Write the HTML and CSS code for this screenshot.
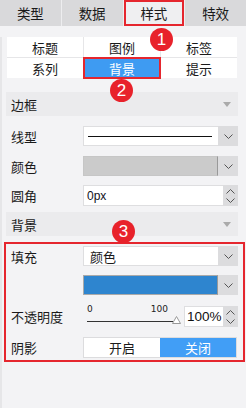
FILE: index.html
```html
<!DOCTYPE html>
<html lang="zh">
<head>
<meta charset="utf-8">
<link rel="stylesheet" href="styles.css">
</head>
<body>
<div class="tabs">
  <div class="tab">类型</div>
  <div class="tab">数据</div>
  <div class="tab active">样式</div>
  <div class="tab">特效</div>
</div>
<div class="page">
  <div class="subtabs">
    <div class="st">标题</div>
    <div class="st">图例</div>
    <div class="st">标签</div>
    <div class="st">系列</div>
    <div class="st sel">背景</div>
    <div class="st">提示</div>
  </div>
  <div class="panel">
    <div class="head">边框<span class="tri"></span></div>
    <div class="row">
      <span class="lbl">线型</span>
      <div class="ctrl">
        <div class="field"><span class="line"></span></div>
        <div class="arrow"><svg width="9" height="5" viewBox="0 0 9 5"><polyline points="0.5,0.5 4.5,4.5 8.5,0.5" fill="none" stroke="#555" stroke-width="1"/></svg></div>
      </div>
    </div>
    <div class="row">
      <span class="lbl">颜色</span>
      <div class="ctrl">
        <div class="field swatch grey"></div>
        <div class="arrow"><svg width="9" height="5" viewBox="0 0 9 5"><polyline points="0.5,0.5 4.5,4.5 8.5,0.5" fill="none" stroke="#555" stroke-width="1"/></svg></div>
      </div>
    </div>
    <div class="row tall">
      <span class="lbl">圆角</span>
      <div class="ctrl">
        <div class="field text small">0px</div>
        <div class="spin">
          <svg width="9" height="5" viewBox="0 0 9 5"><polyline points="0.5,4.5 4.5,0.5 8.5,4.5" fill="none" stroke="#555" stroke-width="1"/></svg>
          <svg width="9" height="5" viewBox="0 0 9 5"><polyline points="0.5,0.5 4.5,4.5 8.5,0.5" fill="none" stroke="#555" stroke-width="1"/></svg>
        </div>
      </div>
    </div>
    <div class="head head2">背景<span class="tri"></span></div>
    <div class="box">
      <div class="row first">
        <span class="lbl">填充</span>
        <div class="ctrl">
          <div class="field text">颜色</div>
          <div class="arrow"><svg width="9" height="5" viewBox="0 0 9 5"><polyline points="0.5,0.5 4.5,4.5 8.5,0.5" fill="none" stroke="#555" stroke-width="1"/></svg></div>
        </div>
      </div>
      <div class="row r2">
        <span class="lbl"></span>
        <div class="ctrl">
          <div class="field swatch blue"></div>
          <div class="arrow"><svg width="9" height="5" viewBox="0 0 9 5"><polyline points="0.5,0.5 4.5,4.5 8.5,0.5" fill="none" stroke="#555" stroke-width="1"/></svg></div>
        </div>
      </div>
      <div class="row r3">
        <span class="lbl">不透明度</span>
        <div class="ctrl">
          <div class="slider">
            <div class="ticks"><span>0</span><span>100</span></div>
            <div class="track"><span class="bar"></span><svg class="thumb" width="9" height="8" viewBox="0 0 9 8"><polygon points="4.5,0.5 8.5,7.5 0.5,7.5" fill="#fff" stroke="#999" stroke-width="1"/></svg></div>
          </div>
          <div class="num">100%</div>
          <div class="spin">
            <svg width="9" height="5" viewBox="0 0 9 5"><polyline points="0.5,4.5 4.5,0.5 8.5,4.5" fill="none" stroke="#555" stroke-width="1"/></svg>
            <svg width="9" height="5" viewBox="0 0 9 5"><polyline points="0.5,0.5 4.5,4.5 8.5,0.5" fill="none" stroke="#555" stroke-width="1"/></svg>
          </div>
        </div>
      </div>
      <div class="row r4">
        <span class="lbl">阴影</span>
        <div class="ctrl toggle">
          <div class="opt">开启</div>
          <div class="opt on">关闭</div>
        </div>
      </div>
    </div>
  </div>
</div>
<div class="badge b1">1</div>
<div class="badge b2">2</div>
<div class="badge b3">3</div>
</body>
</html>
```
FILE: styles.css
```css
* { box-sizing: border-box; }
html, body { margin: 0; padding: 0; }
body {
  width: 246px;
  height: 408px;
  background: #f3f3f5;
  font-family: "Noto Sans CJK SC", "Microsoft YaHei", sans-serif;
  font-size: 13px;
  color: #1a1a1a;
  position: relative;
  overflow: hidden;
}
.tabs {
  display: flex;
  gap: 1px;
  height: 26px;
  background: #ededef;
}
.tab {
  flex: 1;
  background: #d9d9db;
  display: flex;
  align-items: center;
  justify-content: center;
  font-size: 13.5px;
}
.tab.active {
  background: #efeff1;
  box-shadow: inset 0 0 0 2px #e5262e;
}
.page {
  border-left: 2px solid #e6e6e8;
  height: 382px;
}
.subtabs {
  margin: 11px 9px 0 5px;
  display: grid;
  grid-template-columns: 1fr 1fr 1fr;
  grid-auto-rows: 20px;
  gap: 1px;
  background: #e6e6e8;
}
.st {
  background: #fff;
  display: flex;
  align-items: center;
  justify-content: center;
}
.st.sel {
  background: #3e9bf2;
  color: #fff;
  box-shadow: 0 0 0 1px #e5262e, inset 0 0 0 1px #e5262e;
  position: relative;
  z-index: 1;
}
.panel {
  margin: 14px 8px 0 4px;
}
.head {
  height: 24px;
  background: #ebebed;
  display: flex;
  align-items: center;
  justify-content: space-between;
  padding: 0 7px 0 5px;
}
.head2 { margin-top: 6px; }
.tri {
  width: 0;
  height: 0;
  border-left: 4px solid transparent;
  border-right: 4px solid transparent;
  border-top: 5px solid #aaa;
}
.row {
  display: flex;
  align-items: center;
  height: 20px;
  margin-top: 10px;
}
.row.tall { height: 21px; margin-top: 9px; }
.lbl {
  width: 77px;
  padding-left: 5px;
  flex: none;
}
.ctrl {
  flex: 1;
  display: flex;
  height: 100%;
}
.field {
  flex: 1;
  background: #fff;
  border: 1px solid #dedee0;
  border-right: none;
  display: flex;
  align-items: center;
}
.line {
  display: block;
  margin-left: 4px;
  width: 124px;
  height: 1px;
  background: #111;
}
.swatch.grey {
  background: #cbcbcb;
  border-color: #c6c6c6;
  border-right: 1px solid #999;
}
.swatch.blue {
  background: #2e85cf;
  border: 1px solid #a9a9a9;
  border-right: 1px solid #999;
}
.text { padding-left: 6px; }
.text.small { padding-left: 3px; font-family: "Liberation Sans", sans-serif; font-size: 12px; color: #112; }
.arrow {
  width: 20px;
  flex: none;
  background: #dcdcde;
  display: flex;
  align-items: center;
  justify-content: center;
}
.spin {
  width: 15px;
  flex: none;
  background: #dcdcde;
  display: flex;
  flex-direction: column;
  align-items: center;
  justify-content: center;
  gap: 4px;
}
.box {
  margin: 6px -7px 0 -2px;
  border: 2px solid #e5262e;
  padding: 0 5px 0 0;
}
.row.first { margin-top: 2px; }
.row.r2 { margin-top: 9px; }
.row.r3 { margin-top: 11px; height: 21px; }
.row.r4 { margin-top: 10px; height: 21px; margin-bottom: 2px; }
.slider {
  width: 101px;
  flex: none;
  padding-left: 4px;
  display: flex;
  flex-direction: column;
}
.ticks {
  display: flex;
  justify-content: space-between;
  width: 81px;
  font-family: "DejaVu Sans", sans-serif;
  font-size: 9px;
  line-height: 10px;
  color: #222;
  margin-top: -2px;
}
.track {
  display: flex;
  align-items: flex-end;
  height: 10px;
}
.bar {
  display: block;
  width: 86px;
  height: 1px;
  background: #333;
  margin-bottom: 2px;
}
.thumb { margin-left: -1px; }
.num {
  flex: 1;
  background: #fff;
  border: 1px solid #dedee0;
  border-right: none;
  display: flex;
  align-items: center;
  padding-left: 2px;
  font-family: "Liberation Sans", sans-serif;
  font-size: 13.5px;
  color: #111;
}
.toggle {
  border: 1px solid #dcdcde;
  margin-right: 1px;
}
.opt {
  flex: 1;
  display: flex;
  align-items: center;
  justify-content: center;
  background: #fff;
}
.opt.on {
  background: #419ef6;
  color: #fff;
}
.badge {
  position: absolute;
  width: 23px;
  height: 23px;
  border-radius: 50%;
  background: #e8222b;
  color: #fff;
  font-family: "Liberation Sans", sans-serif;
  font-size: 17px;
  display: flex;
  align-items: center;
  justify-content: center;
}
.b1 { left: 150px; top: 28px; }
.b2 { left: 110px; top: 79px; }
.b3 { left: 112px; top: 220px; }
```
